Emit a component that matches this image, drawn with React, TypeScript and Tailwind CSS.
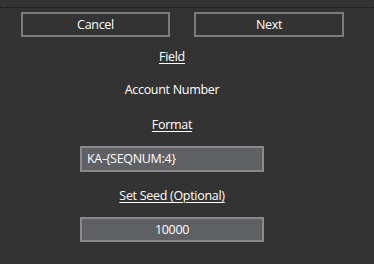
export default function App() {
  return (
    <div
      className="w-[374px] h-[264px] overflow-hidden bg-[#333333] text-white text-[12.5px] font-medium tracking-[-0.3px]"
      style={{ fontFamily: '"Open Sans", "Noto Sans", sans-serif' }}
    >
      <div className="mt-[7px] border-t border-dotted border-[#151515]" />

      <div className="mt-[4px] flex gap-[24px] pl-[21px]">
        <button className="h-[25px] w-[149px] border-2 border-[#7c7c7c] pt-[2px] text-white">
          Cancel
        </button>
        <button className="h-[25px] w-[150px] border-2 border-[#7c7c7c] pt-[2px] text-white">
          Next
        </button>
      </div>

      <div className="flex w-[344px] flex-col items-center">
        <span className="mt-[11px] h-[18px] leading-[18px] underline underline-offset-2">
          Field
        </span>
        <span className="mt-[15px] h-[18px] leading-[18px]">Account Number</span>
        <span className="mt-[17px] h-[18px] leading-[18px] underline underline-offset-2">
          Format
        </span>
        <div className="mt-[12px] flex h-[26px] w-[184px] items-center border-2 border-[#8a8a8a] bg-[#5f6064] px-[5px]">
          KA-{"{SEQNUM:4}"}
        </div>
        <span className="mt-[15px] h-[18px] leading-[18px] underline underline-offset-2">
          Set Seed (Optional)
        </span>
        <div className="mt-[12px] flex h-[25px] w-[184px] items-center justify-center border-2 border-[#8a8a8a] bg-[#5f6064] pt-[1px]">
          10000
        </div>
      </div>
    </div>
  );
}
